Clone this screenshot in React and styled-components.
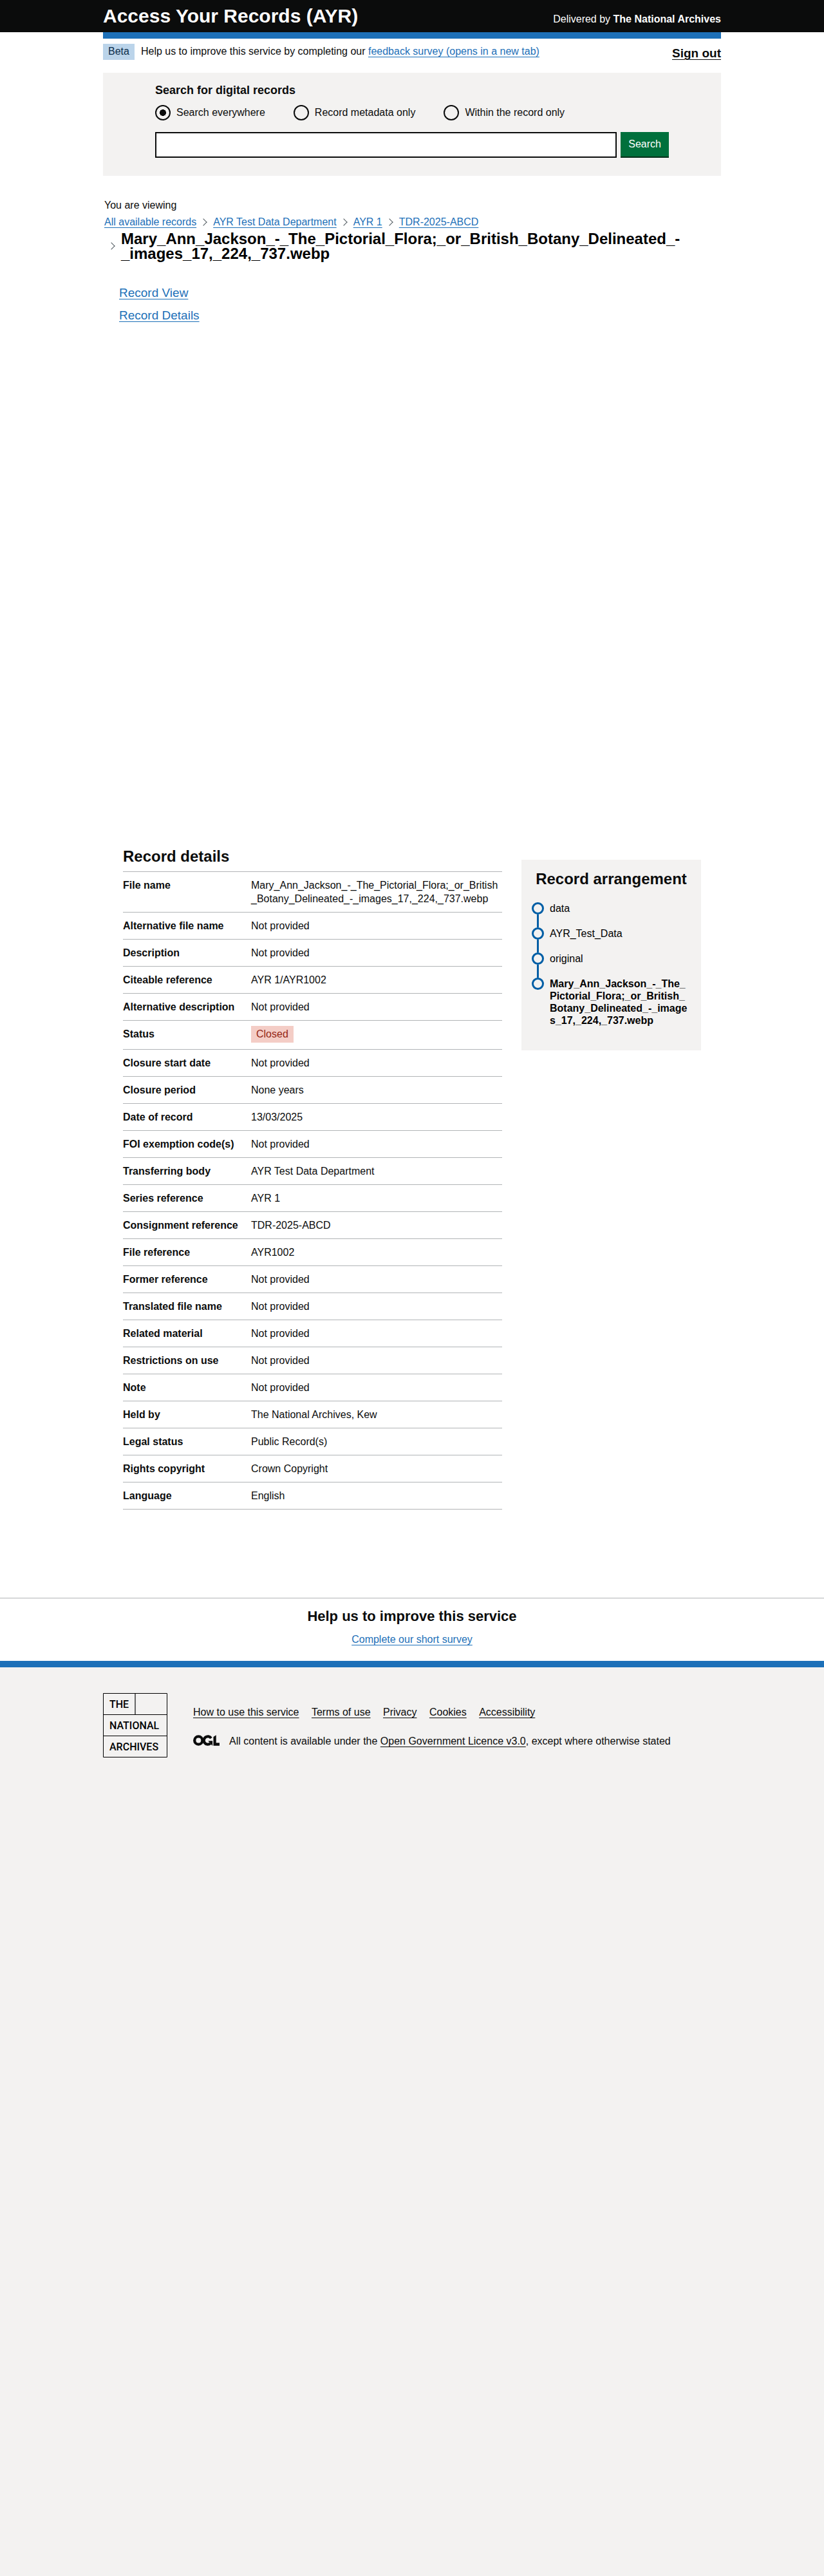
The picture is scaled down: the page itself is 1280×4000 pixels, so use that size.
import React, { useState } from "react";
import styled, { createGlobalStyle } from "styled-components";

const INK = "#0b0c0c";
const BLUE = "#1d70b8";
const GREY = "#f3f2f1";
const LINE = "#b1b4b6";
const RAIL = "#005ea5";

const GlobalStyle = createGlobalStyle`
  *, *::before, *::after { box-sizing: border-box; }
  html { background: ${GREY}; }
  body {
    margin: 0;
    color: ${INK};
    font-family: "Liberation Sans", Arial, sans-serif;
    font-size: 16px;
    line-height: 20px;
  }
  h1, h2, p, ul, ol, dl, dd, dt { margin: 0; padding: 0; }
  ul, ol { list-style: none; }
`;

const Page = styled.div`
  background: #fff;
`;

const Container = styled.div`
  max-width: 960px;
  margin: 0 auto;
`;

const Link = styled.a`
  color: ${({ $dark }) => ($dark ? INK : BLUE)};
  text-decoration: underline;
  text-decoration-thickness: 1px;
  text-underline-offset: 3px;
`;

const TopBar = styled.header`
  background: ${INK};
  color: #fff;
`;

const TopBarInner = styled(Container)`
  display: flex;
  justify-content: space-between;
  align-items: baseline;
  padding: 8px 0;
`;

const ServiceName = styled.span`
  font-size: 30px;
  line-height: 34px;
  font-weight: 700;
`;

const PhaseBanner = styled(Container)`
  display: flex;
  align-items: flex-start;
  padding: 8px 0 20px;
  border-top: 10px solid ${BLUE};
`;

const PhaseText = styled.p`
  flex: 1;
  padding: 2px 10px;
`;

const Tag = styled.strong`
  display: inline-block;
  padding: 2px 8px 3px;
  font-weight: 400;
  background: ${({ $closed }) => ($closed ? "#f4cdc6" : "#bbd4ea")};
  color: ${({ $closed }) => ($closed ? "#942514" : "#0c2d4a")};
`;

const SignOut = styled.div`
  padding-top: 5px;
  font-size: 19px;
  font-weight: 700;
`;

const SearchPanel = styled(Container)`
  padding: 17px 81px 28px;
  background: ${GREY};
`;

const SearchTitle = styled.h2`
  font-size: 18px;
  line-height: 20px;
`;

const RadioRow = styled.div`
  display: flex;
  gap: 44px;
  padding: 13px 0 18px;
`;

const RadioLabel = styled.label`
  display: flex;
  align-items: center;
  gap: 9px;
`;

const Radio = styled.input`
  appearance: none;
  width: 24px;
  height: 24px;
  margin: 0;
  border: 2px solid ${INK};
  border-radius: 50%;
  background: transparent;
  &:checked {
    background: radial-gradient(circle, ${INK} 0 5px, transparent 5px);
  }
`;

const SearchRow = styled.div`
  display: flex;
  gap: 6px;
`;

const SearchInput = styled.input`
  flex: 1;
  min-width: 0;
  height: 40px;
  padding: 5px;
  border: 2px solid ${INK};
  border-radius: 0;
  background: #fff;
  font: inherit;
`;

const SearchButton = styled.button`
  height: 40px;
  padding: 0 12px 2px;
  border: 0;
  background: #00703c;
  box-shadow: inset 0 -2px 0 #002d18;
  color: #fff;
  font: inherit;
`;

const Viewing = styled(Container)`
  padding: 36px 2px 0;
`;

const Crumbs = styled.ol`
  display: flex;
  flex-wrap: wrap;
  row-gap: 4px;
  padding-top: 6px;
`;

const Crumb = styled.li`
  display: flex;
  align-items: center;
  &:not(:first-child)::before {
    content: "";
    width: 8px;
    height: 8px;
    margin: 0 11px 0 7px;
    flex: none;
    border: solid #505a5f;
    border-width: 1px 1px 0 0;
    transform: rotate(45deg);
  }
`;

const CurrentRecord = styled.h1`
  color: #000;
  font-size: 24px;
  line-height: 23px;
  font-weight: 700;
`;

const Tabs = styled.ul`
  display: grid;
  gap: 15px;
  padding: 40px 23px 0;
  font-size: 19px;
`;

const RecordPane = styled(Container)`
  display: flex;
  align-items: flex-start;
  gap: 30px;
  padding: 816px 31px 137px;
`;

const Details = styled.section`
  flex: 1;
  min-width: 0;
`;

const PaneTitle = styled.h2`
  font-size: 24px;
  line-height: 28px;
  text-align: ${({ $center }) => ($center ? "center" : "left")};
`;

const SummaryList = styled.dl`
  margin-top: 9px;
  border-top: 1px solid ${LINE};
`;

const SummaryRow = styled.div`
  display: grid;
  grid-template-columns: 199px 1fr;
  border-bottom: 1px solid ${LINE};
  line-height: 21px;
`;

const Term = styled.dt`
  padding: 10px 0;
  font-weight: 700;
`;

const Value = styled.dd`
  padding: ${({ $tag }) => ($tag ? "8px 0 10px" : "10px 0")};
  word-break: break-all;
`;

const Arrangement = styled.aside`
  width: 279px;
  margin-top: 19px;
  padding: 16px 15px 37px;
  background: ${GREY};
`;

const Tree = styled.ol`
  padding: 22px 1px 0;
`;

const TreeNode = styled.li`
  display: flex;
  gap: 9px;
  line-height: 19px;
  color: #000;
  word-break: break-all;
  font-weight: ${({ $current }) => ($current ? 700 : 400)};
`;

const Rail = styled.span`
  flex: none;
  display: flex;
  flex-direction: column;
  align-items: center;
  &::before {
    content: "";
    width: 19px;
    height: 19px;
    border: 3px solid ${RAIL};
    border-radius: 50%;
  }
  &::after {
    content: "";
    width: 3px;
    height: ${({ $last }) => ($last ? 0 : 20)}px;
    background: ${RAIL};
  }
`;

const Survey = styled.section`
  padding: 15px 0 23px;
  border-top: 1px solid ${LINE};
  text-align: center;
`;

const SurveyTitle = styled.h2`
  margin-bottom: 13px;
  font-size: 22px;
  line-height: 26px;
`;

const Footer = styled.footer`
  padding: 40px 0;
  border-top: 10px solid ${BLUE};
  background: ${GREY};
`;

const FooterInner = styled(Container)`
  display: flex;
  align-items: flex-start;
  gap: 40px;
`;

const FooterText = styled.div`
  padding-top: 20px;
`;

const FooterItem = styled.li`
  display: inline-block;
  margin-right: 15px;
`;

const Licence = styled.div`
  display: flex;
  align-items: flex-start;
  gap: 15px;
  margin-top: 25px;
`;

const ArchivesMark = styled.svg`
  flex: none;
  text {
    font-family: Roboto, sans-serif;
    font-size: 16px;
    font-weight: 500;
  }
`;

const ArchivesLogo = () => (
  <ArchivesMark width="100" height="100" viewBox="0 0 100 100" role="img" aria-label="The National Archives">
    <path d="M.5.5h99v99H.5zM0 33.5h100M0 66.5h100" fill="none" stroke="#000" />
    <path d="M50 1v32" stroke="#666" strokeWidth="2" />
    <text x="10" y="23">THE</text>
    <text x="10" y="56">NATIONAL</text>
    <text x="10" y="89">ARCHIVES</text>
  </ArchivesMark>
);

const OglLogo = () => (
  <svg width="41" height="17" viewBox="0 0 483 196" role="img" aria-label="Open Government Licence">
    <g fill="none" stroke={INK} strokeWidth="51">
      <circle cx="98" cy="98" r="72" />
      <path d="M329 59A72 72 0 1 0 316 152" />
    </g>
    <path d="M275 106h80v88h-3zM421 143V0l-50 32v162h112v-51z" fill={INK} />
  </svg>
);

const FILE = "Mary_Ann_Jackson_-_The_Pictorial_Flora;_or_British_Botany_Delineated_-_images_17,_224,_737.webp";
const NONE = "Not provided";

const SCOPES = ["Search everywhere", "Record metadata only", "Within the record only"];
const CRUMBS = ["All available records", "AYR Test Data Department", "AYR 1", "TDR-2025-ABCD"];
const TREE = ["data", "AYR_Test_Data", "original", FILE];
const FOOTER_LINKS = ["How to use this service", "Terms of use", "Privacy", "Cookies", "Accessibility"];
const DETAILS = [
  ["File name", FILE],
  ["Alternative file name", NONE],
  ["Description", NONE],
  ["Citeable reference", "AYR 1/AYR1002"],
  ["Alternative description", NONE],
  ["Status", "Closed"],
  ["Closure start date", NONE],
  ["Closure period", "None years"],
  ["Date of record", "13/03/2025"],
  ["FOI exemption code(s)", NONE],
  ["Transferring body", "AYR Test Data Department"],
  ["Series reference", "AYR 1"],
  ["Consignment reference", "TDR-2025-ABCD"],
  ["File reference", "AYR1002"],
  ["Former reference", NONE],
  ["Translated file name", NONE],
  ["Related material", NONE],
  ["Restrictions on use", NONE],
  ["Note", NONE],
  ["Held by", "The National Archives, Kew"],
  ["Legal status", "Public Record(s)"],
  ["Rights copyright", "Crown Copyright"],
  ["Language", "English"],
];

export default function App() {
  const [scope, setScope] = useState(SCOPES[0]);
  return (
    <>
      <GlobalStyle />
      <Page>
        <TopBar>
          <TopBarInner>
            <ServiceName>Access Your Records (AYR)</ServiceName>
            <span>
              Delivered by <b>The National Archives</b>
            </span>
          </TopBarInner>
        </TopBar>
        <PhaseBanner>
          <Tag>Beta</Tag>
          <PhaseText>
            Help us to improve this service by completing our{" "}
            <Link href="#survey">feedback survey (opens in a new tab)</Link>
          </PhaseText>
          <SignOut>
            <Link href="#sign-out" $dark>Sign out</Link>
          </SignOut>
        </PhaseBanner>
        <SearchPanel as="form" onSubmit={(e) => e.preventDefault()}>
          <SearchTitle id="search-title">Search for digital records</SearchTitle>
          <RadioRow role="radiogroup" aria-labelledby="search-title">
            {SCOPES.map((s) => (
              <RadioLabel key={s}>
                <Radio type="radio" name="scope" checked={scope === s} onChange={() => setScope(s)} />
                {s}
              </RadioLabel>
            ))}
          </RadioRow>
          <SearchRow>
            <SearchInput type="text" name="query" aria-labelledby="search-title" />
            <SearchButton type="submit">Search</SearchButton>
          </SearchRow>
        </SearchPanel>
        <main>
          <Viewing>
            <p>You are viewing</p>
            <Crumbs>
              {CRUMBS.map((c) => (
                <Crumb key={c}>
                  <Link href="#browse">{c}</Link>
                </Crumb>
              ))}
              <Crumb>
                <CurrentRecord>{FILE}</CurrentRecord>
              </Crumb>
            </Crumbs>
            <Tabs>
              <li><Link href="#record-view">Record View</Link></li>
              <li><Link href="#record-details">Record Details</Link></li>
            </Tabs>
          </Viewing>
          <RecordPane>
            <Details id="record-details">
              <PaneTitle>Record details</PaneTitle>
              <SummaryList>
                {DETAILS.map(([term, value]) => (
                  <SummaryRow key={term}>
                    <Term>{term}</Term>
                    <Value $tag={term === "Status"}>
                      {term === "Status" ? <Tag $closed>{value}</Tag> : value}
                    </Value>
                  </SummaryRow>
                ))}
              </SummaryList>
            </Details>
            <Arrangement>
              <PaneTitle $center>Record arrangement</PaneTitle>
              <Tree>
                {TREE.map((name) => (
                  <TreeNode key={name} $current={name === FILE}>
                    <Rail $last={name === FILE} />
                    <span>{name}</span>
                  </TreeNode>
                ))}
              </Tree>
            </Arrangement>
          </RecordPane>
        </main>
        <Survey id="survey">
          <SurveyTitle>Help us to improve this service</SurveyTitle>
          <Link href="#short-survey">Complete our short survey</Link>
        </Survey>
        <Footer>
          <FooterInner>
            <ArchivesLogo />
            <FooterText>
              <ul>
                {FOOTER_LINKS.map((l) => (
                  <React.Fragment key={l}>
                    <FooterItem><Link href="#footer" $dark>{l}</Link></FooterItem>{" "}
                  </React.Fragment>
                ))}
              </ul>
              <Licence>
                <OglLogo />
                <p>
                  All content is available under the{" "}
                  <Link href="#licence" $dark>Open Government Licence v3.0</Link>, except where otherwise stated
                </p>
              </Licence>
            </FooterText>
          </FooterInner>
        </Footer>
      </Page>
    </>
  );
}
